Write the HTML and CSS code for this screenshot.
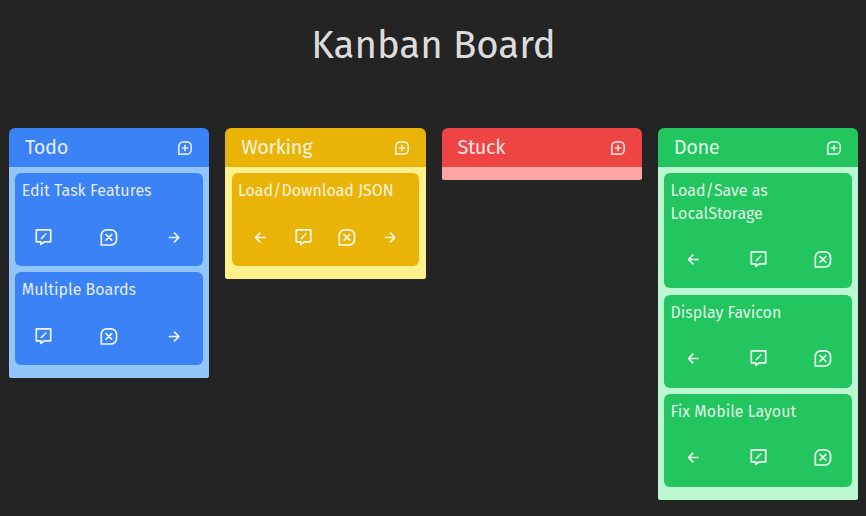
FILE: index.html
```html
<!DOCTYPE html>
<html lang="en">
<head>
<meta charset="utf-8">
<title>Kanban Board</title>
<link rel="stylesheet" href="styles.css">
</head>
<body>
<svg class="sprite" aria-hidden="true">
  <symbol id="add" viewBox="0 0 20 20"><path d="M3.8 16.2V8.3a4.5 4.5 0 0 1 4.5-4.5h3.4a4.5 4.5 0 0 1 4.5 4.5v3.4a4.5 4.5 0 0 1-4.5 4.5zM6.7 10h6.6M10 6.7v6.6"/></symbol>
  <symbol id="edit" viewBox="-0.3 -0.4 20 20"><path d="M3 2.5h14.4v11.9h-6.2l-3.7 2.6v-2.6H3zM7.6 11.6l3.5-3.6M11.5 7.6l1.5-1.5"/></symbol>
  <symbol id="delete" viewBox="0.1 -0.4 20 20"><path d="M2.4 17.6V7.9a5.5 5.5 0 0 1 5.5-5.5h4.2a5.5 5.5 0 0 1 5.5 5.5v4.2a5.5 5.5 0 0 1-5.5 5.5zM6.7 6.7l6.6 6.6M13.3 6.7l-6.6 6.6"/></symbol>
  <symbol id="right" viewBox="0 -0.5 20 20"><path d="M4.7 10h10.2M10 5.1l4.9 4.9-4.9 4.9"/></symbol>
  <symbol id="left" viewBox="-0.4 -0.5 20 20"><path d="M15.3 10H5.1M10 5.1L5.1 10l4.9 4.9"/></symbol>
</svg>
<h1 class="title">Kanban Board</h1>
<main class="board">
  <section class="column blue">
    <header class="head"><h2 class="name">Todo</h2><svg class="icon add"><use href="#add"/></svg></header>
    <div class="list">
      <article class="card"><p class="task">Edit Task Features</p><div class="actions"><svg class="icon"><use href="#edit"/></svg><svg class="icon"><use href="#delete"/></svg><svg class="icon"><use href="#right"/></svg></div></article>
      <article class="card"><p class="task">Multiple Boards</p><div class="actions"><svg class="icon"><use href="#edit"/></svg><svg class="icon"><use href="#delete"/></svg><svg class="icon"><use href="#right"/></svg></div></article>
    </div>
  </section>
  <section class="column yellow">
    <header class="head"><h2 class="name">Working</h2><svg class="icon add"><use href="#add"/></svg></header>
    <div class="list">
      <article class="card"><p class="task">Load/Download JSON</p><div class="actions"><svg class="icon"><use href="#left"/></svg><svg class="icon"><use href="#edit"/></svg><svg class="icon"><use href="#delete"/></svg><svg class="icon"><use href="#right"/></svg></div></article>
    </div>
  </section>
  <section class="column red">
    <header class="head"><h2 class="name">Stuck</h2><svg class="icon add"><use href="#add"/></svg></header>
    <div class="list"></div>
  </section>
  <section class="column green">
    <header class="head"><h2 class="name">Done</h2><svg class="icon add"><use href="#add"/></svg></header>
    <div class="list">
      <article class="card tall"><p class="task">Load/Save as<br>LocalStorage</p><div class="actions"><svg class="icon"><use href="#left"/></svg><svg class="icon"><use href="#edit"/></svg><svg class="icon"><use href="#delete"/></svg></div></article>
      <article class="card"><p class="task">Display Favicon</p><div class="actions"><svg class="icon"><use href="#left"/></svg><svg class="icon"><use href="#edit"/></svg><svg class="icon"><use href="#delete"/></svg></div></article>
      <article class="card"><p class="task">Fix Mobile Layout</p><div class="actions"><svg class="icon"><use href="#left"/></svg><svg class="icon"><use href="#edit"/></svg><svg class="icon"><use href="#delete"/></svg></div></article>
    </div>
  </section>
</main>
</body>
</html>
```
FILE: styles.css
```css
* { box-sizing: border-box; }
body {
  margin: 0;
  min-height: 516px;
  background: #242424;
  color: rgba(255, 255, 255, .87);
  font-family: "Fira Sans", "Noto Sans", sans-serif;
}
.sprite { display: none; }
.title {
  margin: 0;
  height: 128px;
  padding: 21px 0 0 1px;
  font-size: 38.4px;
  line-height: 48px;
  font-weight: 400;
  text-align: center;
}
.board {
  display: grid;
  grid-template-columns: repeat(4, 1fr);
  gap: 16px;
  align-items: start;
  padding: 0 8px 0 9px;
}
.column { border-radius: 6px 6px 2px 2px; overflow: hidden; }
.head {
  display: flex;
  justify-content: space-between;
  align-items: center;
  height: 39px;
  padding: 0 14px 0 16px;
  background: var(--main);
}
.name { margin: -1px 0 0; font-size: 20px; line-height: 37px; font-weight: 400; letter-spacing: -.4px; }
.list { background: var(--soft); padding: 6px 6.4px 7px; }
.card {
  height: 93px;
  margin-bottom: 6px;
  padding: 6px 0 0;
  border-radius: 6px;
  background: var(--main);
}
.card.tall { height: 115px; margin-bottom: 7px; }
.task { margin: 0; padding-left: 6.4px; font-size: 16px; line-height: 23px; white-space: nowrap; }
.tall .task { height: 45px; }
.actions { display: flex; justify-content: space-between; padding: 25px 18.8px 0 18.4px; }
.blue .actions { padding-left: 18px; }
.tall ~ .card .actions { padding-top: 24px; }
.icon {
  display: block;
  width: 20px;
  height: 20px;
  fill: none;
  stroke: rgba(255, 255, 255, .92);
  stroke-width: 1.7;
  stroke-linejoin: round;
}
.icon.add { stroke: rgba(255, 255, 255, .8); }
.blue { --main: #3b82f6; --soft: #93c5fd; }
.yellow { --main: #eab308; --soft: #fef08a; }
.red { --main: #ef4444; --soft: #fca5a5; }
.green { --main: #22c55e; --soft: #bbf7d0; }
```
